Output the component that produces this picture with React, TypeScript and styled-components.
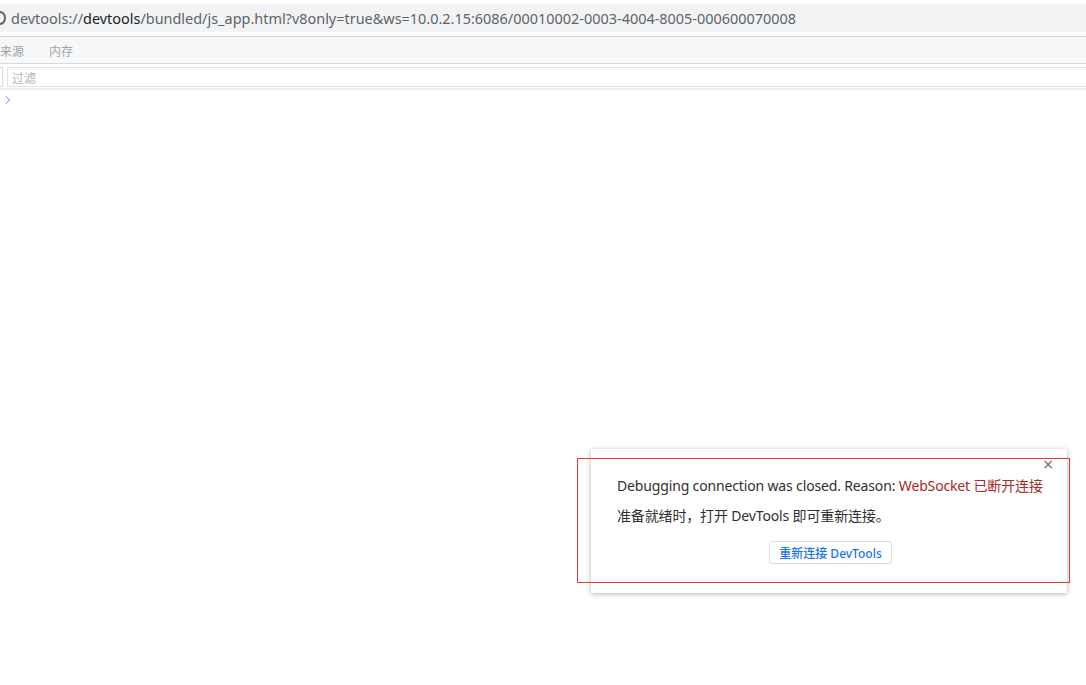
import styled, { createGlobalStyle } from "styled-components";

const GlobalStyle = createGlobalStyle`
  html, body {
    margin: 0;
    padding: 0;
    background: #ffffff;
    font-family: "Noto Sans", "Noto Sans CJK SC", sans-serif;
  }
  #root {
    position: relative;
    width: 1086px;
    height: 685px;
    overflow: hidden;
  }
`;

const Page = styled.div`
  position: relative;
  width: 1086px;
  height: 685px;
  padding-top: 4px;
  box-sizing: border-box;
`;

const AddressBar = styled.div`
  height: 28px;
  display: flex;
  align-items: center;
  background: #f1f3f4;
  border-bottom: 4px solid #ffffff;
  box-sizing: content-box;
  overflow: hidden;
`;

const SiteIcon = styled.span`
  width: 8px;
  height: 10px;
  margin-left: -6px;
  margin-right: 5px;
  border: 2px solid #5f6368;
  border-radius: 50%;
  flex-shrink: 0;
`;

const Url = styled.span`
  font-size: 14.45px;
  color: #5f6368;
  white-space: nowrap;
`;

const Host = styled.span`
  color: #202124;
`;

const TabBar = styled.div`
  height: 26px;
  display: flex;
  align-items: center;
  gap: 25px;
  background: #f7f8fa;
  border-top: 1px solid #dadada;
  border-bottom: 1px solid #dadada;
`;

const Tab = styled.span`
  font-size: 12px;
  color: #a0a4a8;
  font-family: "Noto Sans CJK SC", sans-serif;
`;

const FilterRow = styled.div`
  display: flex;
  align-items: stretch;
  gap: 4px;
  padding: 3px 0 1px 0;
  border-bottom: 2px solid #ececec;
`;

const FilterStub = styled.div`
  width: 3px;
  height: 20px;
  border: 1px solid #d8d8d8;
  border-left: none;
  box-sizing: border-box;
`;

const FilterInput = styled.div`
  flex: 1;
  height: 20px;
  border: 1px solid #e3e3e3;
  border-right: none;
  box-sizing: border-box;
  display: flex;
  align-items: center;
  padding-left: 4px;
  font-size: 12px;
  color: #b4b4b4;
  font-family: "Noto Sans CJK SC", sans-serif;
`;

const Console = styled.div`
  padding: 3px 0 0 3px;
`;

const Prompt = styled.span`
  display: block;
  width: 5px;
  height: 5px;
  border-right: 1.5px solid #8fb3f0;
  border-top: 1.5px solid #8fb3f0;
  transform: rotate(45deg);
  margin-top: 4px;
`;

const Dialog = styled.div`
  position: absolute;
  left: 591px;
  top: 449px;
  width: 476px;
  height: 144px;
  background: #ffffff;
  box-shadow: 0 1px 5px rgba(0, 0, 0, 0.3);
  box-sizing: border-box;
  padding: 28px 20px 0 26px;
  display: flex;
  flex-direction: column;
`;

const CloseButton = styled.span`
  position: absolute;
  right: 13px;
  top: 8px;
  font-size: 14px;
  line-height: 14px;
  color: #5f6368;
  font-family: "DejaVu Sans", sans-serif;
`;

const Line = styled.div`
  font-size: 14px;
  line-height: 18px;
  letter-spacing: -0.15px;
  color: #303030;
  white-space: nowrap;
  margin-bottom: 12px;
`;

const Reason = styled.span`
  color: #a52a2a;
`;

const ButtonRow = styled.div`
  display: flex;
  justify-content: center;
  margin-top: 4px;
`;

const ReconnectButton = styled.button`
  height: 23px;
  padding: 0 9px;
  background: #ffffff;
  border: 1px solid #dadce0;
  border-radius: 3px;
  color: #1a73e8;
  font-size: 12px;
  font-weight: 500;
  font-family: "Noto Sans", "Noto Sans CJK SC", sans-serif;
  cursor: pointer;
  margin-right: 3px;
`;

const Annotation = styled.div`
  position: absolute;
  left: 577px;
  top: 458px;
  width: 493px;
  height: 125px;
  border: 1px solid #e53935;
  box-sizing: border-box;
  pointer-events: none;
`;

export default function App() {
  return (
    <>
      <GlobalStyle />
      <Page>
        <AddressBar>
          <SiteIcon />
          <Url>
            devtools://<Host>devtools</Host>
            /bundled/js_app.html?v8only=true&amp;ws=10.0.2.15:6086/00010002-0003-4004-8005-000600070008
          </Url>
        </AddressBar>
        <TabBar>
          <Tab>来源</Tab>
          <Tab>内存</Tab>
        </TabBar>
        <FilterRow>
          <FilterStub />
          <FilterInput>过滤</FilterInput>
        </FilterRow>
        <Console>
          <Prompt />
        </Console>
        <Dialog>
          <CloseButton>×</CloseButton>
          <Line>
            Debugging connection was closed. Reason: <Reason>WebSocket 已断开连接</Reason>
          </Line>
          <Line>准备就绪时，打开 DevTools 即可重新连接。</Line>
          <ButtonRow>
            <ReconnectButton>重新连接 DevTools</ReconnectButton>
          </ButtonRow>
        </Dialog>
        <Annotation />
      </Page>
    </>
  );
}
